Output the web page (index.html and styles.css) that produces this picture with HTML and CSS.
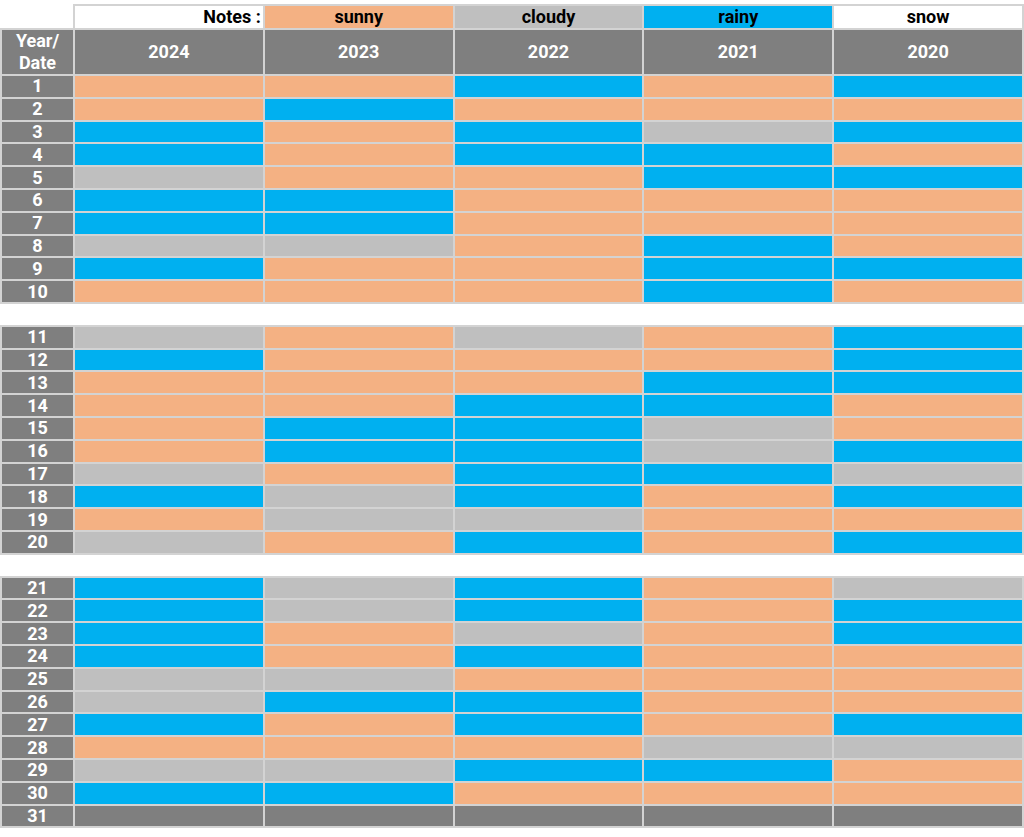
FILE: index.html
```html
<!DOCTYPE html>
<html lang="en">
<head>
<meta charset="utf-8">
<title>Weather by date</title>
<link rel="stylesheet" href="styles.css">
</head>
<body>
<table class="grid">
  <colgroup>
    <col class="c-date">
    <col class="c-year"><col class="c-year"><col class="c-year"><col class="c-year"><col class="c-year">
  </colgroup>
  <thead>
    <tr class="legend">
      <td class="blank"></td>
      <td class="notes">Notes :</td>
      <td class="s">sunny</td>
      <td class="c">cloudy</td>
      <td class="r">rainy</td>
      <td class="w">snow</td>
    </tr>
    <tr class="years">
      <th>Year/<br>Date</th>
      <th>2024</th><th>2023</th><th>2022</th><th>2021</th><th>2020</th>
    </tr>
  </thead>
  <tbody>
    <tr><th>1</th><td class="s"></td><td class="s"></td><td class="r"></td><td class="s"></td><td class="r"></td></tr>
    <tr><th>2</th><td class="s"></td><td class="r"></td><td class="s"></td><td class="s"></td><td class="s"></td></tr>
    <tr><th>3</th><td class="r"></td><td class="s"></td><td class="r"></td><td class="c"></td><td class="r"></td></tr>
    <tr><th>4</th><td class="r"></td><td class="s"></td><td class="r"></td><td class="r"></td><td class="s"></td></tr>
    <tr><th>5</th><td class="c"></td><td class="s"></td><td class="s"></td><td class="r"></td><td class="r"></td></tr>
    <tr><th>6</th><td class="r"></td><td class="r"></td><td class="s"></td><td class="s"></td><td class="s"></td></tr>
    <tr><th>7</th><td class="r"></td><td class="r"></td><td class="s"></td><td class="s"></td><td class="s"></td></tr>
    <tr><th>8</th><td class="c"></td><td class="c"></td><td class="s"></td><td class="r"></td><td class="s"></td></tr>
    <tr><th>9</th><td class="r"></td><td class="s"></td><td class="s"></td><td class="r"></td><td class="r"></td></tr>
    <tr><th>10</th><td class="s"></td><td class="s"></td><td class="s"></td><td class="r"></td><td class="s"></td></tr>
    <tr class="gap"><td></td><td></td><td></td><td></td><td></td><td></td></tr>
    <tr><th>11</th><td class="c"></td><td class="s"></td><td class="c"></td><td class="s"></td><td class="r"></td></tr>
    <tr><th>12</th><td class="r"></td><td class="s"></td><td class="s"></td><td class="s"></td><td class="r"></td></tr>
    <tr><th>13</th><td class="s"></td><td class="s"></td><td class="s"></td><td class="r"></td><td class="r"></td></tr>
    <tr><th>14</th><td class="s"></td><td class="s"></td><td class="r"></td><td class="r"></td><td class="s"></td></tr>
    <tr><th>15</th><td class="s"></td><td class="r"></td><td class="r"></td><td class="c"></td><td class="s"></td></tr>
    <tr><th>16</th><td class="s"></td><td class="r"></td><td class="r"></td><td class="c"></td><td class="r"></td></tr>
    <tr><th>17</th><td class="c"></td><td class="s"></td><td class="r"></td><td class="r"></td><td class="c"></td></tr>
    <tr><th>18</th><td class="r"></td><td class="c"></td><td class="r"></td><td class="s"></td><td class="r"></td></tr>
    <tr><th>19</th><td class="s"></td><td class="c"></td><td class="c"></td><td class="s"></td><td class="s"></td></tr>
    <tr><th>20</th><td class="c"></td><td class="s"></td><td class="r"></td><td class="s"></td><td class="r"></td></tr>
    <tr class="gap"><td></td><td></td><td></td><td></td><td></td><td></td></tr>
    <tr><th>21</th><td class="r"></td><td class="c"></td><td class="r"></td><td class="s"></td><td class="c"></td></tr>
    <tr><th>22</th><td class="r"></td><td class="c"></td><td class="r"></td><td class="s"></td><td class="r"></td></tr>
    <tr><th>23</th><td class="r"></td><td class="s"></td><td class="c"></td><td class="s"></td><td class="r"></td></tr>
    <tr><th>24</th><td class="r"></td><td class="s"></td><td class="r"></td><td class="s"></td><td class="s"></td></tr>
    <tr><th>25</th><td class="c"></td><td class="c"></td><td class="s"></td><td class="s"></td><td class="s"></td></tr>
    <tr><th>26</th><td class="c"></td><td class="r"></td><td class="r"></td><td class="s"></td><td class="s"></td></tr>
    <tr><th>27</th><td class="r"></td><td class="s"></td><td class="r"></td><td class="s"></td><td class="r"></td></tr>
    <tr><th>28</th><td class="s"></td><td class="s"></td><td class="s"></td><td class="c"></td><td class="c"></td></tr>
    <tr><th>29</th><td class="c"></td><td class="c"></td><td class="r"></td><td class="r"></td><td class="s"></td></tr>
    <tr><th>30</th><td class="r"></td><td class="r"></td><td class="s"></td><td class="s"></td><td class="s"></td></tr>
    <tr><th>31</th><td class="g"></td><td class="g"></td><td class="g"></td><td class="g"></td><td class="g"></td></tr>
  </tbody>
</table>
</body>
</html>
```

FILE: styles.css
```css
html, body {
  margin: 0;
  padding: 0;
  background: #ffffff;
}

body {
  font-family: Roboto, "Liberation Sans", Arial, sans-serif;
  padding: 4px 0 0 0;
}

.grid {
  border-collapse: collapse;
  table-layout: fixed;
  width: 1022px;
  font-size: 18px;
  font-weight: 700;
}

.c-date { width: 73px; }
.c-year { width: 189.8px; }

.grid td,
.grid th {
  border: 2px solid #d3d3d3;
  padding: 0;
  text-align: center;
  vertical-align: middle;
  line-height: 20px;
}

.grid th {
  background: #7f7f7f;
  color: #ffffff;
  font-weight: 700;
}

.legend td {
  height: 22px;
  color: #000000;
}

.legend .blank {
  border: none;
  background: transparent;
}

.legend .notes {
  text-align: right;
  padding-right: 2px;
  background: #ffffff;
}

.years th {
  height: 42px;
  line-height: 22px;
}

tbody tr {
  height: 22.8px;
}

tbody td,
tbody th {
  height: 20.8px;
}

.gap td {
  border-left: none;
  border-right: none;
  background: #ffffff;
}

.s { background: #f4b183; }
.c { background: #bfbfbf; }
.r { background: #00b0f0; }
.w { background: #ffffff; }
.g { background: #7f7f7f; }
```
